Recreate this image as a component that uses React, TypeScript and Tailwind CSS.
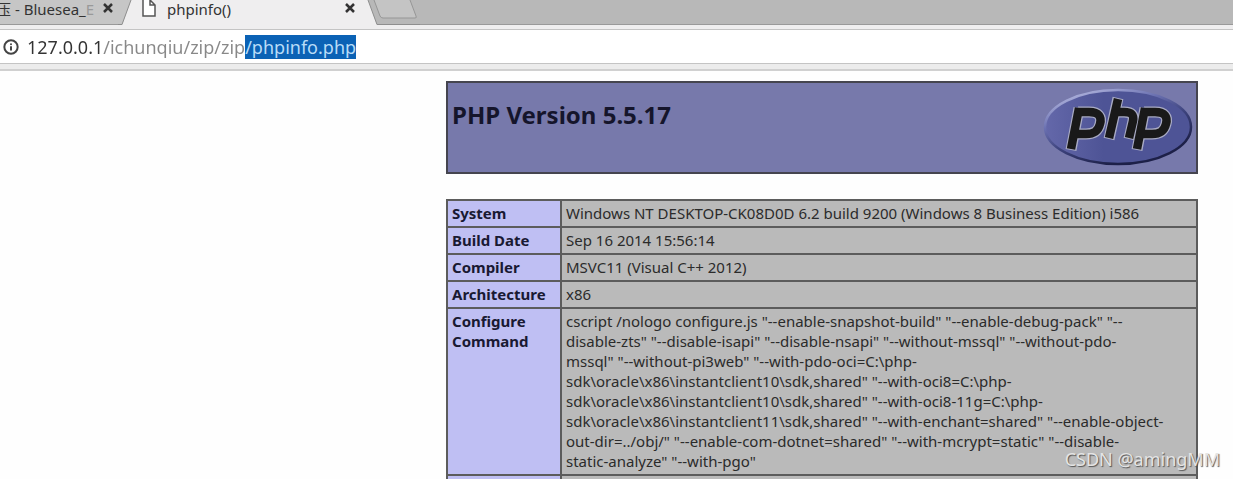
import { useEffect, useRef } from 'react'
import { Info } from 'lucide-react'

const rows = [
  { label: 'System', lines: ['Windows NT DESKTOP-CK08D0D 6.2 build 9200 (Windows 8 Business Edition) i586'] },
  { label: 'Build Date', lines: ['Sep 16 2014 15:56:14'] },
  { label: 'Compiler', lines: ['MSVC11 (Visual C++ 2012)'] },
  { label: 'Architecture', lines: ['x86'] },
  {
    label: 'Configure Command',
    lines: [
      'cscript /nologo configure.js "--enable-snapshot-build" "--enable-debug-pack" "--',
      'disable-zts" "--disable-isapi" "--disable-nsapi" "--without-mssql" "--without-pdo-',
      'mssql" "--without-pi3web" "--with-pdo-oci=C:\\php-',
      'sdk\\oracle\\x86\\instantclient10\\sdk,shared" "--with-oci8=C:\\php-',
      'sdk\\oracle\\x86\\instantclient10\\sdk,shared" "--with-oci8-11g=C:\\php-',
      'sdk\\oracle\\x86\\instantclient11\\sdk,shared" "--with-enchant=shared" "--enable-object-',
      'out-dir=../obj/" "--enable-com-dotnet=shared" "--with-mcrypt=static" "--disable-',
      'static-analyze" "--with-pgo"',
    ],
  },
]

const url = '127.0.0.1/ichunqiu/zip/zip/phpinfo.php'

function CloseIcon() {
  return (
    <svg viewBox="0 0 10 10" className="size-[10px]" fill="none" stroke="#333" strokeWidth="2.5">
      <path d="M1 1l8 8M9 1l-8 8" />
    </svg>
  )
}

function TabStrip() {
  return (
    <div className="flex h-[25px] items-stretch bg-[#b8b8b8] text-[15px] leading-[18px] text-[#333]">
      <div className="flex w-[118px] shrink-0 items-start border-b border-[#999] bg-[#c6c6c6]">
        <button role="tab" aria-selected="false" className="-ml-1 w-[103px] whitespace-nowrap text-left">
          压 - Bluesea_<span className="text-[#999]">E</span>
        </button>
        <button aria-label="Close Bluesea tab" className="ml-1 mt-[3px]">
          <CloseIcon />
        </button>
      </div>
      <svg viewBox="0 0 18 25" className="h-[25px] w-[18px] shrink-0">
        <path d="M0 0H13L4 25H0z" fill="#c6c6c6" />
        <path d="M13 0H18V25H4z" fill="#efeeef" />
        <path d="M0 24.5H4L13 0" fill="none" stroke="#8e8e8e" />
      </svg>
      <div className="flex w-[230px] shrink-0 items-start bg-[#efeeef]">
        <svg viewBox="0 0 14 17" className="ml-[6px] h-[17px] w-[14px]" fill="#fff" stroke="#555" strokeWidth="1.5">
          <path d="M1 0V16H13V5L8 0M8 0V5H13" />
        </svg>
        <button role="tab" aria-selected="true" className="ml-[11px] flex-1 text-left">
          phpinfo()
        </button>
        <button aria-label="Close phpinfo tab" className="mr-[11px] mt-[3px]">
          <CloseIcon />
        </button>
      </div>
      <button aria-label="New tab" className="shrink-0">
        <svg viewBox="0 0 54 25" className="h-[25px] w-[54px]">
          <path d="M0 0H2L11 25H0z" fill="#efeeef" />
          <path d="M2 0L11 24.5H54" fill="none" stroke="#8e8e8e" />
          <path d="M8 0L14 16Q15 18 17 18H49Q51 18 50 16L44 0" fill="#c4c4c4" stroke="#969696" />
        </svg>
      </button>
      <div className="flex-1 border-b border-[#999]" />
    </div>
  )
}

function AddressBar() {
  const ref = useRef<HTMLInputElement>(null)

  useEffect(() => {
    ref.current?.focus()
    ref.current?.setSelectionRange(url.lastIndexOf('/'), url.length)
  }, [])

  return (
    <div className="bg-[#efeeef] pt-1">
      <div className="flex h-[35px] items-center border-y border-[#c4c4c4] bg-white pl-[3px]">
        <Info className="size-4 shrink-0 text-[#444]" strokeWidth={3} />
        <input
          ref={ref}
          aria-label="Address"
          defaultValue={url}
          className="ml-2 h-6 min-w-0 flex-1 bg-linear-to-r from-[#333] from-[76px] to-[#888] to-[76px] bg-clip-text text-[18px] leading-6 text-transparent outline-none selection:bg-[#0b62b5] selection:text-[#b9dcf8]"
        />
      </div>
      <div className="h-[7px] border-b-2 border-[#d0d0d0] bg-[#ececec]" />
    </div>
  )
}

function PhpLogo() {
  return (
    <svg viewBox="0 0 150 80" className="h-[80px] w-[150px]" role="img" aria-label="PHP logo">
      <defs>
        <linearGradient id="rim" x1="0.2" y1="0" x2="0.8" y2="1">
          <stop offset="0" stopColor="#b4b8e0" />
          <stop offset="0.3" stopColor="#6a70b0" />
          <stop offset="0.55" stopColor="#3c427c" />
          <stop offset="0.85" stopColor="#1d2048" />
        </linearGradient>
        <linearGradient id="face" x1="0" y1="0" x2="1" y2="0">
          <stop offset="0" stopColor="#6468aa" />
          <stop offset="0.4" stopColor="#4e5496" />
        </linearGradient>
      </defs>
      <ellipse cx="75" cy="40" rx="73" ry="37" fill="url(#face)" stroke="url(#rim)" strokeWidth="2.5" />
      <g fill="none">
        <g stroke="#a9abc4" strokeWidth="11">
          <path d="M28 63L36 21M35 25H46C56 25 59 30 57 37C55 45 50 47 43 47H32" />
          <path d="M75 11L66 52M72 25H81C89 25 91 28 90 34L86 52" />
          <path d="M94 63L102 21M101 25H112C122 25 125 30 123 37C121 45 116 47 109 47H98" />
        </g>
        <g stroke="#191919" strokeWidth="8.5">
          <path d="M28 62L36 21M35 25H46C56 25 59 30 57 37C55 45 50 47 43 47H32" />
          <path d="M75 12L66 51M72 25H81C89 25 91 28 90 34L86 51" />
          <path d="M94 62L102 21M101 25H112C122 25 125 30 123 37C121 45 116 47 109 47H98" />
        </g>
      </g>
    </svg>
  )
}

export default function App() {
  return (
    <div className="relative h-screen overflow-hidden bg-[#fefefe] font-['Noto_Sans','Noto_Sans_CJK_SC',sans-serif]">
      <TabStrip />
      <AddressBar />
      <main className="pl-[446px] pr-[35px] pt-[10px]">
        <header className="flex h-[93px] items-start justify-between border-2 border-[#45454f] bg-[#7779ab] pl-1 pr-[3px] pt-1">
          <h1 className="mt-3 text-2xl font-bold text-[#15152b]">PHP Version 5.5.17</h1>
          <PhpLogo />
        </header>
        <table className="mt-[25px] w-full table-fixed border-collapse text-[15px] leading-5">
          <colgroup>
            <col className="w-[114px]" />
            <col />
          </colgroup>
          <tbody>
            {rows.map((row) => (
              <tr key={row.label}>
                <th scope="row" className="border-2 border-[#5c5c5c] bg-[#bfbff3] px-1 pb-[3px] pt-[2px] text-left align-top font-bold text-[#191932]">
                  {row.label}
                </th>
                <td className="whitespace-nowrap border-2 border-[#5c5c5c] bg-[#bababa] px-1 pb-[3px] pt-[2px] align-top text-[#2b2b2b]">
                  {row.lines.map((line) => (
                    <div key={line}>{line}</div>
                  ))}
                </td>
              </tr>
            ))}
            <tr>
              <th className="h-[27px] border-2 border-[#5c5c5c] bg-[#bfbff3]" />
              <td className="border-2 border-[#5c5c5c] bg-[#bababa]" />
            </tr>
          </tbody>
        </table>
      </main>
      <div className="absolute bottom-2 right-[13px] text-[18px] leading-6 text-[#e4e4e4] [text-shadow:1px_1px_1px_#555]">
        CSDN @amingMM
      </div>
    </div>
  )
}
